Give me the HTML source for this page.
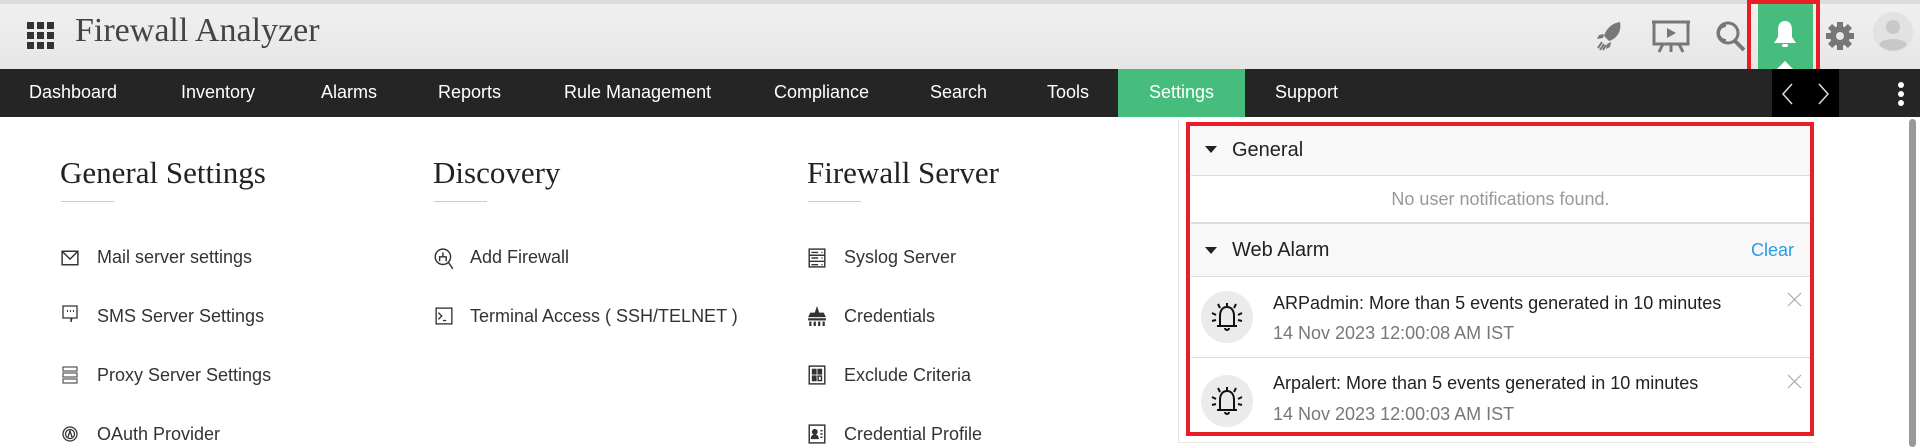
<!DOCTYPE html>
<html><head><meta charset="utf-8">
<style>
*{margin:0;padding:0;box-sizing:border-box}
body{width:1920px;height:447px;overflow:hidden;background:#fff;font-family:"Liberation Sans",sans-serif;position:relative}
.hdr{position:absolute;left:0;top:0;width:1920px;height:69px;background:linear-gradient(#f0f0f0,#e6e6e6);border-top:4px solid #dcdcdc}
.title{position:absolute;left:75px;top:12px;font-family:"Liberation Serif",serif;font-size:34px;color:#444}
.nav{position:absolute;left:0;top:69px;width:1920px;height:48px;background:#252525}
.nav span{position:absolute;top:13px;color:#fff;font-size:18px}
.abs{position:absolute}
h2{position:absolute;font-family:"Liberation Serif",serif;font-weight:normal;font-size:31px;color:#222}
.ul{position:absolute;height:1px;width:53px;background:#ccc;top:201px}
.it{position:absolute;font-size:18px;color:#333}
.ic{position:absolute;width:18px;height:18px}
.panel{position:absolute;left:1178px;top:119px;width:636px;height:324px;background:#fff;border-left:1px solid #e5e5e5;border-bottom:1px solid #e5e5e5}
.sec{position:absolute;left:1191px;width:619px;background:#f8f8f8;border-bottom:1px solid #ddd}
.tri{position:absolute;left:14px;width:0;height:0;border-left:6px solid transparent;border-right:6px solid transparent;border-top:7px solid #222}
</style></head><body>
<div class="hdr"></div>
<svg class="abs" style="left:27px;top:22px" width="27" height="27" viewBox="0 0 27 27" fill="#333">
<rect x="0" y="0" width="7" height="7"/><rect x="10" y="0" width="7" height="7"/><rect x="20" y="0" width="7" height="7"/>
<rect x="0" y="10" width="7" height="7"/><rect x="10" y="10" width="7" height="7"/><rect x="20" y="10" width="7" height="7"/>
<rect x="0" y="20" width="7" height="7"/><rect x="10" y="20" width="7" height="7"/><rect x="20" y="20" width="7" height="7"/></svg>
<div class="title">Firewall Analyzer</div>
<svg class="abs" style="left:1596px;top:20px" width="28" height="32" viewBox="0 0 28 32" fill="#777"><path d="M24 2 C16 3 10 9 8 16 L13 21 C20 19 26 12 24 2Z"/><path d="M8 14 L3 15 L1 19 L7 18Z M15 22 L14 27 L10 29 L11 24Z"/><path d="M6 22 L2 28 M8 24 L4 30 M10 25 L7 30" stroke="#777" stroke-width="2"/></svg>
<svg class="abs" style="left:1651px;top:19px" width="40" height="34" viewBox="0 0 40 34" fill="none" stroke="#777" stroke-width="3"><rect x="3" y="3" width="34" height="22"/><path d="M1 3H39M20 25V33M8 33L12 25M32 33L28 25"/><path d="M16 9L25 14L16 19Z" fill="#777" stroke="none"/></svg>
<svg class="abs" style="left:1716px;top:20px" width="30" height="32" viewBox="0 0 30 32" fill="none" stroke="#777" stroke-width="3"><circle cx="12" cy="13" r="10"/><path d="M19 21L28 30" stroke-width="4"/><path d="M10 6A7 7 0 0 0 10 20" stroke-width="2"/></svg>
<div class="abs" style="left:1747px;top:0;width:73px;height:75px;border:4px solid #e81d25"></div>
<div class="abs" style="left:1758px;top:4px;width:55px;height:65px;background:#46bd7c"></div>
<svg class="abs" style="left:1772px;top:20px" width="26" height="30" viewBox="0 0 26 30" fill="#fff"><path d="M13 1C8 1 6 5 6 10V17L2 23H24L20 17V10C20 5 18 1 13 1Z"/><rect x="10" y="24" width="6" height="3" rx="1.5"/></svg>
<div class="abs" style="left:1777px;top:61px;width:0;height:0;border-left:8px solid transparent;border-right:8px solid transparent;border-bottom:8px solid #fff"></div>
<svg class="abs" style="left:1826px;top:22px" width="28" height="28" viewBox="0 0 28 28"><g fill="#777" transform="translate(14 14)"><rect x="-3" y="-14" width="6" height="28"/><rect x="-3" y="-14" width="6" height="28" transform="rotate(45)"/><rect x="-3" y="-14" width="6" height="28" transform="rotate(90)"/><rect x="-3" y="-14" width="6" height="28" transform="rotate(135)"/><circle r="10"/><circle r="4" fill="#e9e9e9"/></g></svg>
<svg class="abs" style="left:1873px;top:9px" width="40" height="46" viewBox="0 0 40 46"><circle cx="20" cy="23" r="20" fill="#e2e2e2"/><circle cx="20" cy="18" r="7" fill="#c8c8c8"/><path d="M6 36C8 28 32 28 34 36A20 20 0 0 1 6 36Z" fill="#c8c8c8"/></svg>
<div class="nav">
<span style="left:29px">Dashboard</span><span style="left:181px">Inventory</span><span style="left:321px">Alarms</span><span style="left:438px">Reports</span><span style="left:564px">Rule Management</span><span style="left:774px">Compliance</span><span style="left:930px">Search</span><span style="left:1047px">Tools</span>
<div class="abs" style="left:1118px;top:0;width:127px;height:48px;background:#46bd7c"></div>
<span style="left:1149px">Settings</span><span style="left:1275px">Support</span>
<div class="abs" style="left:1772px;top:0;width:67px;height:48px;background:#000"></div>
<svg class="abs" style="left:1781px;top:14px" width="50" height="22" viewBox="0 0 50 22" fill="none" stroke="#ddd" stroke-width="1.5"><path d="M11 1L2 11L11 21M38 1L47 11L38 21"/></svg>
<div class="abs" style="left:1898px;top:13px;width:6px;height:6px;border-radius:3px;background:#fff"></div>
<div class="abs" style="left:1898px;top:22px;width:6px;height:6px;border-radius:3px;background:#fff"></div>
<div class="abs" style="left:1898px;top:31px;width:6px;height:6px;border-radius:3px;background:#fff"></div>
</div>
<div class="abs" style="left:1909px;top:119px;width:7px;height:328px;border-radius:4px;background:#999"></div>
<h2 style="left:60px;top:155px">General Settings</h2><div class="ul" style="left:61px"></div>
<h2 style="left:433px;top:155px">Discovery</h2><div class="ul" style="left:434px"></div>
<h2 style="left:807px;top:155px">Firewall Server</h2><div class="ul" style="left:808px"></div>
<svg class="ic" style="left:61px;top:249px" viewBox="0 0 16 16" fill="none" stroke="#333" stroke-width="1.3"><rect x="1" y="2" width="14" height="12"/><path d="M1 2L8 9L15 2"/></svg><div class="it" style="left:97px;top:247px">Mail server settings</div>
<svg class="ic" style="left:61px;top:305px" viewBox="0 0 16 18" fill="none" stroke="#333" stroke-width="1.3"><path d="M1 1H15V13H10L9 17V13H1Z"/><path d="M5 6H6M8 6H9M11 6H12" stroke-width="2"/></svg><div class="it" style="left:97px;top:306px">SMS Server Settings</div>
<svg class="ic" style="left:61px;top:366px" viewBox="0 0 16 18" fill="none" stroke="#555" stroke-width="1.2"><rect x="1" y="1" width="14" height="4"/><rect x="1" y="7" width="14" height="4"/><rect x="1" y="13" width="14" height="4"/></svg><div class="it" style="left:97px;top:365px">Proxy Server Settings</div>
<svg class="ic" style="left:61px;top:425px" viewBox="0 0 16 18" fill="none" stroke="#333" stroke-width="1.3"><circle cx="8" cy="9" r="7"/><circle cx="8" cy="9" r="4.5"/><path d="M6 12L8 6L10 12"/></svg><div class="it" style="left:97px;top:424px">OAuth Provider</div>
<svg class="ic" style="left:434px;top:248px;width:20px;height:22px" viewBox="0 0 18 20" fill="none" stroke="#333" stroke-width="1.3"><circle cx="8" cy="8" r="7"/><path d="M13 13L17 19M5 12V8H11V12M8 4V8"/></svg><div class="it" style="left:470px;top:247px">Add Firewall</div>
<svg class="ic" style="left:435px;top:307px" viewBox="0 0 16 16" fill="none" stroke="#333" stroke-width="1.2"><rect x="1" y="1" width="14" height="14"/><path d="M3 5L6 8L3 11M7 12H10"/></svg><div class="it" style="left:470px;top:306px">Terminal Access ( SSH/TELNET )</div>
<svg class="ic" style="left:808px;top:248px;height:20px" viewBox="0 0 16 18" fill="none" stroke="#333" stroke-width="1.3"><rect x="1" y="1" width="14" height="16"/><path d="M1 6.5H15M1 12H15M3 4H9M3 9H9M3 15H9M12 4H13M12 9H13M12 15H13"/></svg><div class="it" style="left:844px;top:247px">Syslog Server</div>
<svg class="ic" style="left:808px;top:306px;height:20px" viewBox="0 0 16 18" fill="#333"><path d="M8 0L10 6H14L16 10H0L2 6H6Z"/><rect x="0" y="11" width="16" height="2"/><rect x="1" y="14" width="2" height="4"/><rect x="5" y="14" width="2" height="4"/><rect x="9" y="14" width="2" height="4"/><rect x="13" y="14" width="2" height="4"/></svg><div class="it" style="left:844px;top:306px">Credentials</div>
<svg class="ic" style="left:808px;top:365px;height:20px" viewBox="0 0 16 18" fill="none" stroke="#333" stroke-width="1.3"><rect x="1" y="1" width="14" height="16"/><rect x="4" y="4" width="3" height="4" fill="#333"/><rect x="9" y="4" width="3" height="4" fill="#333"/><rect x="4" y="10" width="3" height="4" fill="#333"/><rect x="9" y="10" width="3" height="4"/></svg><div class="it" style="left:844px;top:365px">Exclude Criteria</div>
<svg class="ic" style="left:808px;top:424px;height:20px" viewBox="0 0 16 18" fill="none" stroke="#333" stroke-width="1.3"><rect x="1" y="1" width="14" height="16"/><circle cx="6" cy="7" r="2" fill="#333"/><path d="M3 13C3 9 9 9 9 13Z" fill="#333"/><path d="M11 6H13M11 9H13M11 12H13"/></svg><div class="it" style="left:844px;top:424px">Credential Profile</div>
<div class="panel"></div>
<div class="sec" style="top:126px;height:50px"><div class="tri" style="top:20px"></div><div class="abs" style="left:41px;top:13px;font-size:20px;color:#222">General</div></div>
<div class="abs" style="left:1191px;top:176px;width:619px;height:48px;border-bottom:2px solid #ddd;text-align:center;padding-top:13px;font-size:18px;color:#999">No user notifications found.</div>
<div class="sec" style="top:224px;height:53px"><div class="tri" style="top:23px"></div><div class="abs" style="left:41px;top:15px;font-size:20px;color:#222">Web Alarm</div><div class="abs" style="left:560px;top:16px;font-size:18px;color:#2a9ce0">Clear</div></div>
<div class="abs" style="left:1191px;top:277px;width:619px;height:81px;border-bottom:1px solid #ddd"></div>
<svg class="abs" style="left:1199px;top:289px" width="56" height="56" viewBox="0 0 56 56"><circle cx="28" cy="28" r="26" fill="#ebebeb"/><g fill="none" stroke="#111" stroke-width="2"><path d="M21 37V27C21 21 24 18 28 18C32 18 35 21 35 27V37M18 37H38M28 14V18M26 39A2 2 0 0 0 30 39"/><path d="M13 24L17 26M13 32L17 31M19 15L21 19M37 15L35 19M43 24L39 26M43 32L39 31"/></g></svg>
<div class="abs" style="left:1273px;top:293px;font-size:18px;color:#222">ARPadmin: More than 5 events generated in 10 minutes</div>
<div class="abs" style="left:1273px;top:323px;font-size:18px;color:#777">14 Nov 2023 12:00:08 AM IST</div>
<svg class="abs" style="left:1787px;top:292px" width="15" height="15" viewBox="0 0 15 15" stroke="#aaa" stroke-width="1.2"><path d="M1 1L14 14M14 1L1 14"/></svg>
<svg class="abs" style="left:1199px;top:373px" width="56" height="56" viewBox="0 0 56 56"><circle cx="28" cy="28" r="26" fill="#ebebeb"/><g fill="none" stroke="#111" stroke-width="2"><path d="M21 37V27C21 21 24 18 28 18C32 18 35 21 35 27V37M18 37H38M28 14V18M26 39A2 2 0 0 0 30 39"/><path d="M13 24L17 26M13 32L17 31M19 15L21 19M37 15L35 19M43 24L39 26M43 32L39 31"/></g></svg>
<div class="abs" style="left:1273px;top:373px;font-size:18px;color:#222">Arpalert: More than 5 events generated in 10 minutes</div>
<div class="abs" style="left:1273px;top:404px;font-size:18px;color:#777">14 Nov 2023 12:00:03 AM IST</div>
<svg class="abs" style="left:1787px;top:374px" width="15" height="15" viewBox="0 0 15 15" stroke="#aaa" stroke-width="1.2"><path d="M1 1L14 14M14 1L1 14"/></svg>
<div class="abs" style="left:1186px;top:122px;width:628px;height:314px;border:4px solid #e81d25"></div>
</body></html>
